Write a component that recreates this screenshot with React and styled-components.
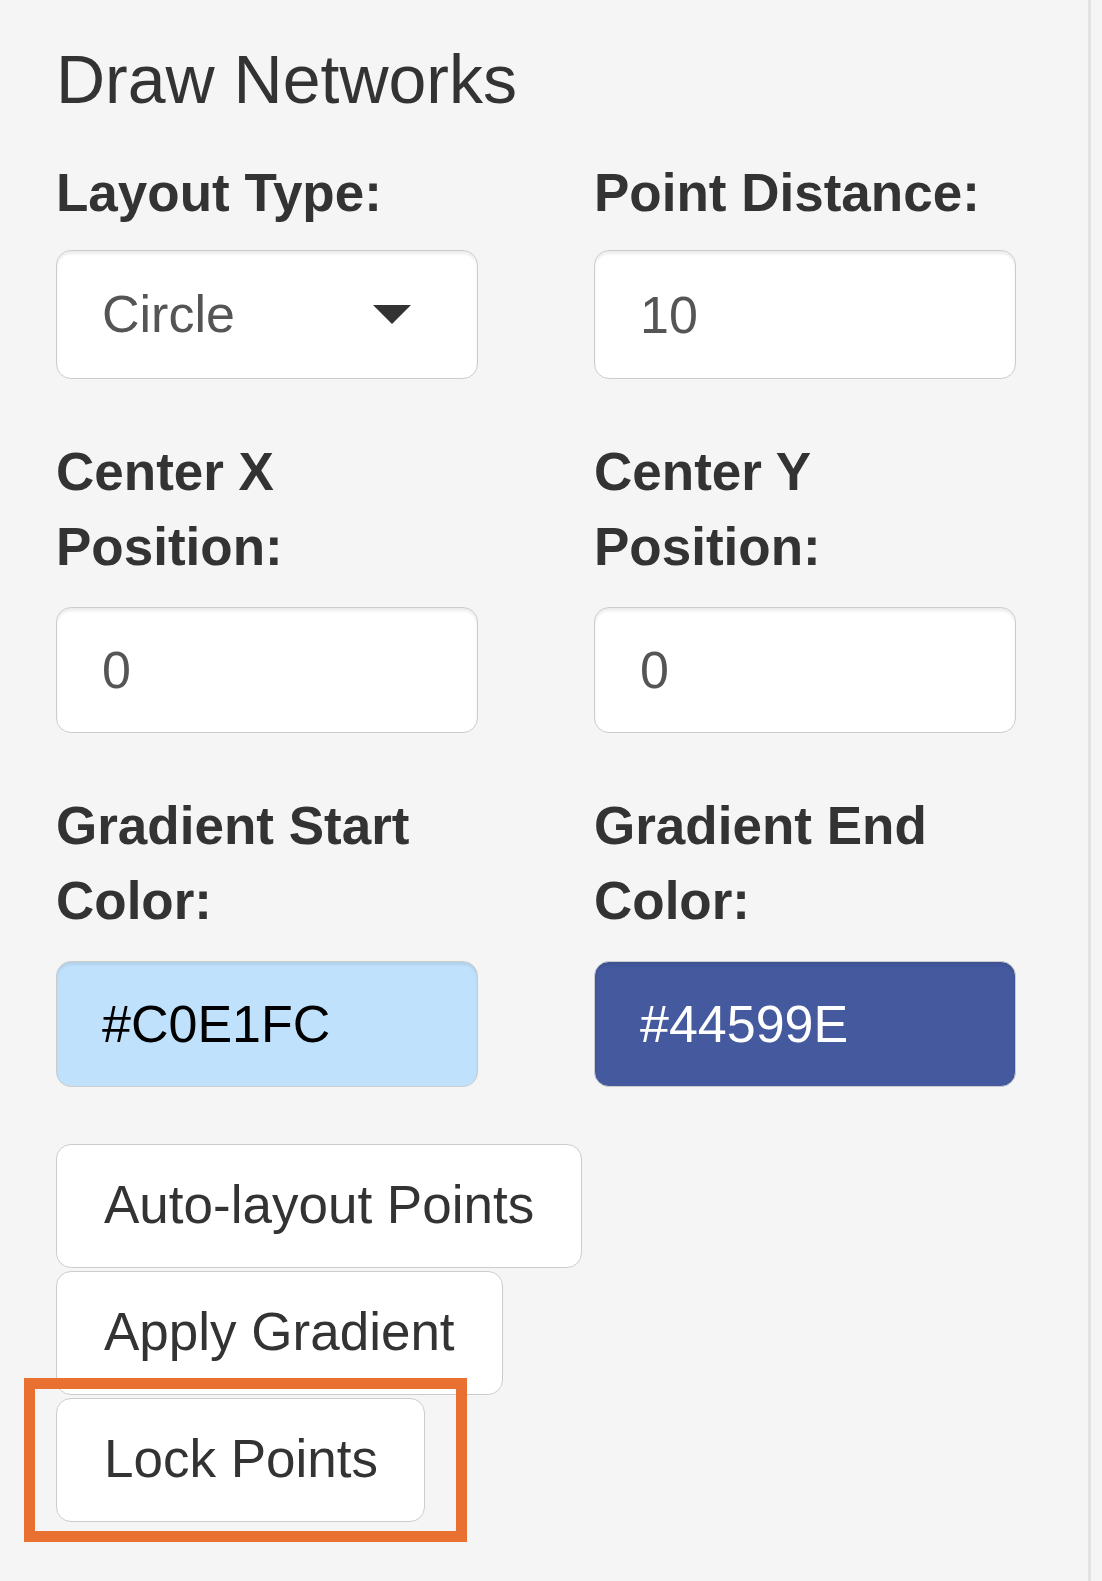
import React from "react";
import styled, { createGlobalStyle } from "styled-components";

const GlobalStyle = createGlobalStyle`
  html, body {
    margin: 0;
    padding: 0;
    background: #f5f5f5;
  }
  * {
    box-sizing: border-box;
  }
`;

function App() {
  return (
    <>
      <GlobalStyle />
      <Panel>
        <Title>Draw Networks</Title>
        <FormGrid>
          <Field>
            <Label>Layout Type:</Label>
            <SelectBox $tall>
              <span>Circle</span>
              <svg width="38" height="19" viewBox="0 0 38 19">
                <polygon points="0,0 38,0 19,19" fill="#333" />
              </svg>
            </SelectBox>
          </Field>
          <Field>
            <Label>Point Distance:</Label>
            <TextInput type="text" defaultValue="10" $tall />
          </Field>

          <Field>
            <Label>
              Center X
              <br />
              Position:
            </Label>
            <TextInput type="text" defaultValue="0" />
          </Field>
          <Field>
            <Label>
              Center Y
              <br />
              Position:
            </Label>
            <TextInput type="text" defaultValue="0" />
          </Field>

          <Field>
            <Label>
              Gradient Start
              <br />
              Color:
            </Label>
            <TextInput
              type="text"
              defaultValue="#C0E1FC"
              $bg="#C0E1FC"
              $fg="#000"
            />
          </Field>
          <Field>
            <Label>
              Gradient End
              <br />
              Color:
            </Label>
            <TextInput
              type="text"
              defaultValue="#44599E"
              $bg="#44599E"
              $fg="#fff"
            />
          </Field>
        </FormGrid>

        <ButtonStack>
          <Button>Auto-layout Points</Button>
          <Button>Apply Gradient</Button>
          <Highlight>
            <Button $narrow>Lock Points</Button>
          </Highlight>
        </ButtonStack>
      </Panel>
    </>
  );
}

const Panel = styled.div`
  width: 1091px;
  min-height: 1581px;
  padding: 42px 0 0 56px;
  border-right: 3px solid #e3e3e3;
  font-family: "Liberation Sans", Arial, sans-serif;
  color: #333;
`;

const Title = styled.h3`
  margin: 0 0 38px;
  font-size: 68px;
  font-weight: 500;
  line-height: 75px;
  color: #333;
`;

const FormGrid = styled.div`
  display: grid;
  grid-template-columns: 422px 422px;
  column-gap: 116px;
  row-gap: 55px;
`;

const Field = styled.div`
  display: flex;
  flex-direction: column;
`;

const Label = styled.label`
  display: block;
  margin-bottom: 23px;
  font-size: 53px;
  font-weight: 700;
  line-height: 75px;
  color: #333;
`;

const SelectBox = styled.div`
  display: flex;
  align-items: center;
  justify-content: space-between;
  height: ${(p) => (p.$tall ? "129px" : "126px")};
  margin-top: ${(p) => (p.$tall ? "-3px" : "0")};
  padding: 0 66px 0 45px;
  background: #fff;
  border: 1px solid #ccc;
  border-radius: 15px;
  box-shadow: inset 0 3px 3px rgba(0, 0, 0, 0.075);
  font-size: 52px;
  line-height: 75px;
  color: #555;
`;

const TextInput = styled.input`
  display: block;
  width: 100%;
  height: ${(p) => (p.$tall ? "129px" : "126px")};
  margin: ${(p) => (p.$tall ? "-3px 0 0" : "0")};
  padding: 0 45px;
  background: ${(p) => p.$bg || "#fff"};
  border: 1px solid #ccc;
  border-radius: 15px;
  box-shadow: inset 0 3px 3px rgba(0, 0, 0, 0.075);
  font-family: "Liberation Sans", Arial, sans-serif;
  font-size: 52px;
  line-height: 75px;
  color: ${(p) => p.$fg || "#555"};
  outline: none;
`;

const ButtonStack = styled.div`
  display: flex;
  flex-direction: column;
  align-items: flex-start;
  gap: 3px;
  margin-top: 57px;
`;

const Button = styled.button`
  display: inline-block;
  margin: 0;
  padding: ${(p) => (p.$narrow ? "22px 46px 25px 47px" : "22px 47px 25px")};
  background: #fff;
  border: 1px solid #ccc;
  border-radius: 15px;
  font-family: "Liberation Sans", Arial, sans-serif;
  font-size: 53px;
  line-height: 75px;
  color: #333;
  white-space: nowrap;
  cursor: pointer;
`;

const Highlight = styled.div`
  position: relative;
  display: inline-block;

  &::after {
    content: "";
    position: absolute;
    top: -20px;
    bottom: -20px;
    left: -32px;
    right: -42px;
    border: 11px solid #e87131;
    pointer-events: none;
  }
`;

export default App;
